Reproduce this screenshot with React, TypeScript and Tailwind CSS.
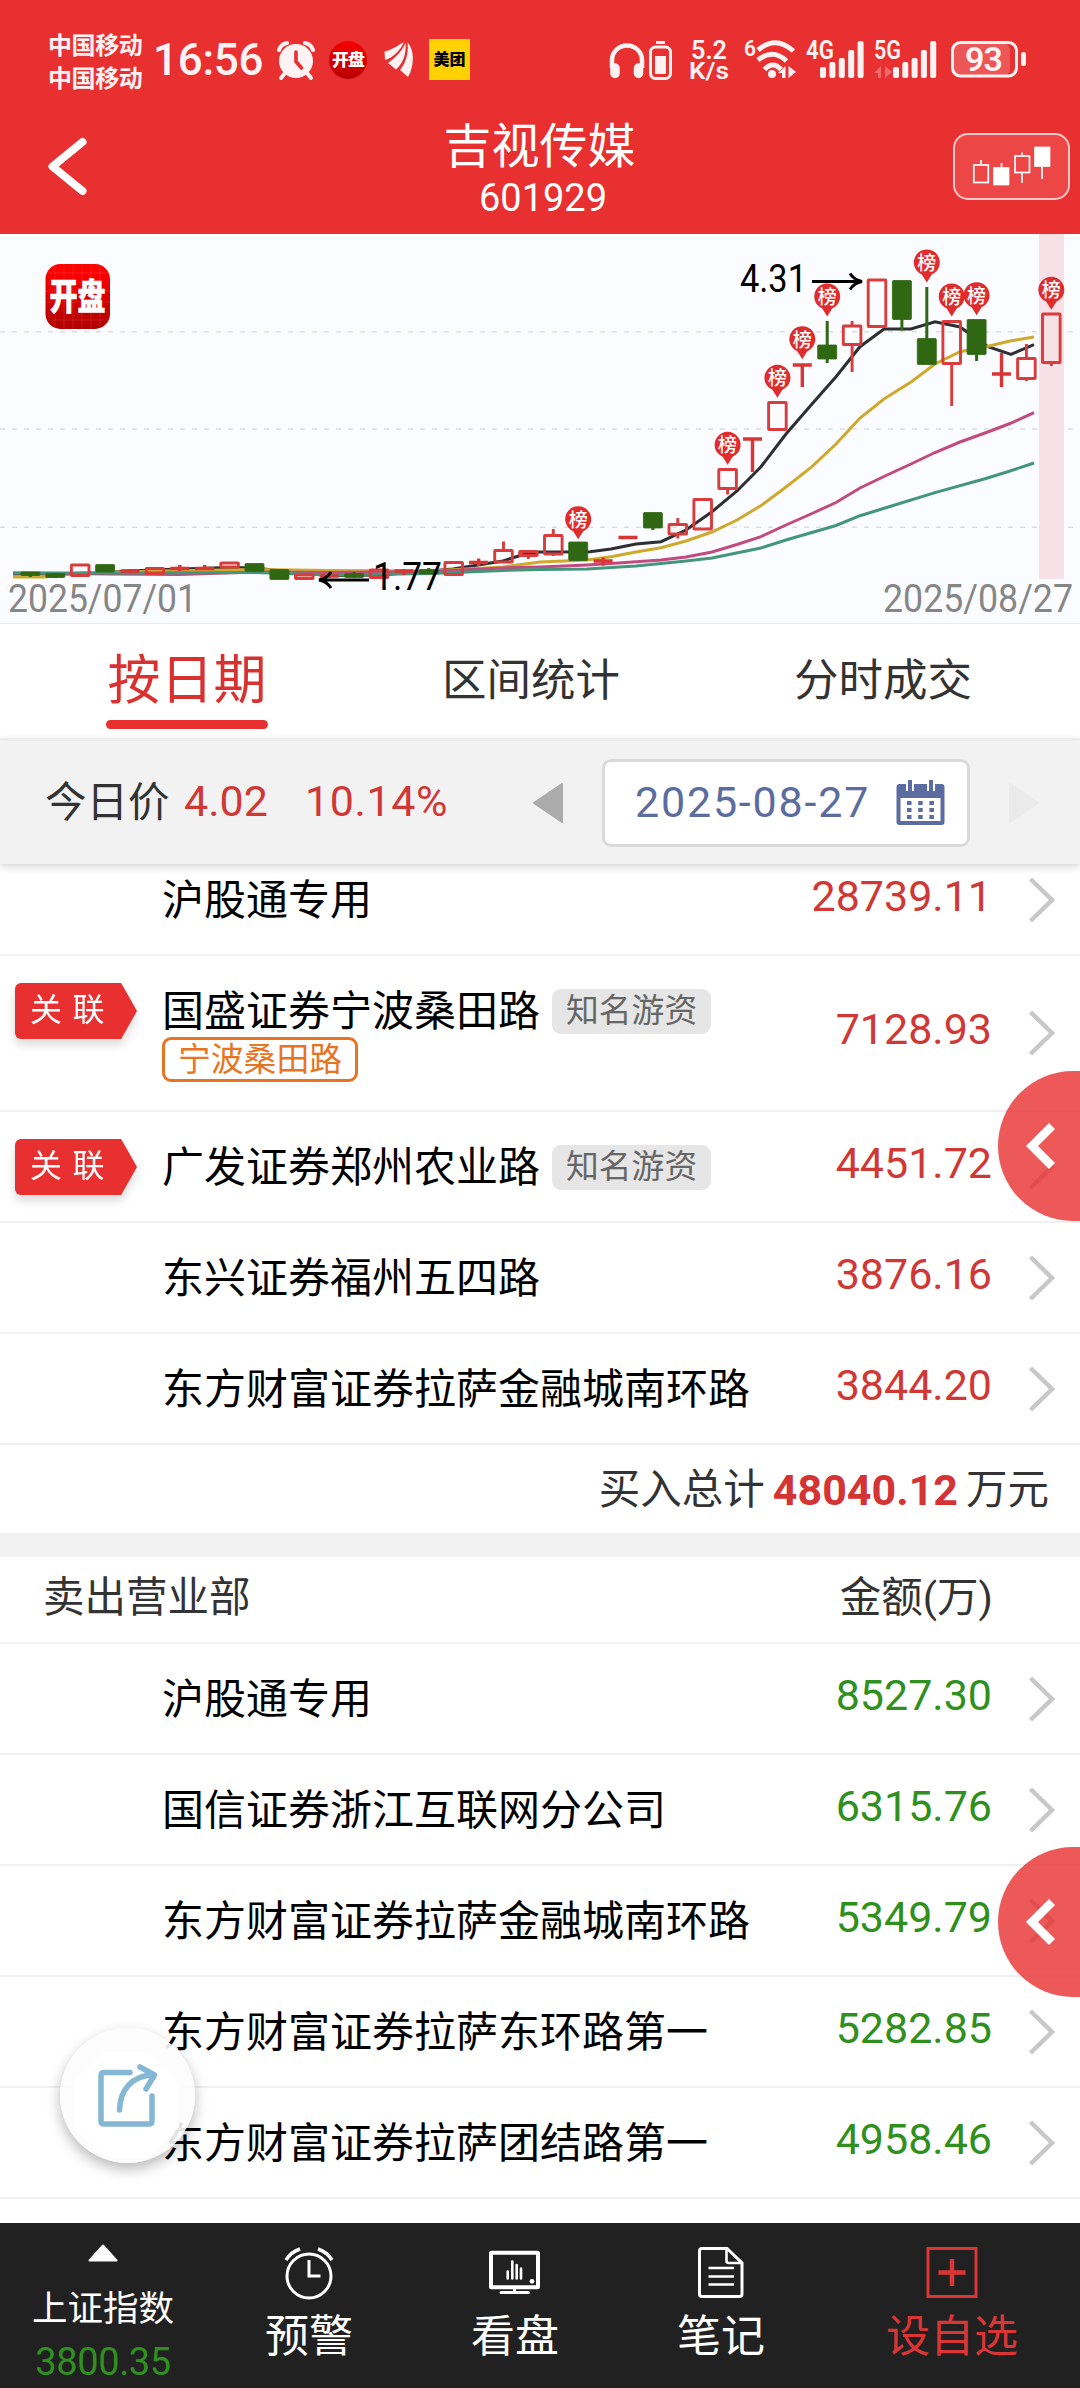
import type { ReactNode } from 'react';

interface Seat {
  name: string;
  amount: string;
  related?: boolean;
  famous?: boolean;
  alias?: string;
}

const BUY_SEATS: Seat[] = [
  { name: '沪股通专用', amount: '28739.11' },
  { name: '国盛证券宁波桑田路', amount: '7128.93', related: true, famous: true, alias: '宁波桑田路' },
  { name: '广发证券郑州农业路', amount: '4451.72', related: true, famous: true },
  { name: '东兴证券福州五四路', amount: '3876.16' },
  { name: '东方财富证券拉萨金融城南环路', amount: '3844.20' }
];

const SELL_SEATS: Seat[] = [
  { name: '沪股通专用', amount: '8527.30' },
  { name: '国信证券浙江互联网分公司', amount: '6315.76' },
  { name: '东方财富证券拉萨金融城南环路', amount: '5349.79' },
  { name: '东方财富证券拉萨东环路第一', amount: '5282.85' },
  { name: '东方财富证券拉萨团结路第一', amount: '4958.46' }
];

// r = 空心阳线, g = 实心阴线, d = 一字 / T 字线
type Candle = ['r' | 'g' | 'd', number, number, number, number];

// [类型, 实体顶, 实体底, 上影, 下影]
const CANDLES: Candle[] = [
  ['g', 572, 575.5, 572, 577],
  ['g', 573.5, 577.5, 573, 578],
  ['r', 565, 575.5, 564, 575],
  ['g', 564.5, 572, 565, 572],
  ['d', 571, 571, 569, 573],
  ['r', 568.5, 573.5, 568, 574],
  ['d', 568.5, 568.5, 565, 571],
  ['d', 568.5, 568.5, 565, 570],
  ['r', 563, 567, 563, 567],
  ['g', 563.5, 571.5, 564, 572],
  ['g', 569.5, 579.5, 570, 579],
  ['r', 575, 578.5, 573, 578],
  ['d', 576, 576, 575, 578],
  ['g', 573.5, 577.5, 572, 578],
  ['r', 570, 577.5, 570, 577],
  ['d', 571, 571, 569, 575],
  ['g', 569.5, 574, 568, 574],
  ['r', 562.5, 574.5, 562, 574],
  ['d', 562.5, 562.5, 558.5, 566],
  ['r', 550.5, 562, 541.5, 562],
  ['r', 551.5, 555.5, 551, 559],
  ['r', 535.5, 554, 529, 556],
  ['g', 542, 560.5, 542, 560],
  ['d', 561, 561, 557.5, 565.5],
  ['d', 537.5, 537.5, 537, 538],
  ['g', 512.5, 528, 513, 530],
  ['r', 524.5, 534, 518, 538.5],
  ['r', 499.5, 529, 499, 529],
  ['r', 469.5, 488.5, 469, 494.5],
  ['d', 439, 439, 439, 472],
  ['r', 402.5, 429.5, 402, 431],
  ['d', 365, 365, 365, 387],
  ['g', 345, 359, 321, 363],
  ['r', 326, 344.5, 321, 372],
  ['r', 280, 326.5, 280, 326],
  ['g', 280.5, 319.5, 281, 330.5],
  ['g', 338.5, 364.5, 287, 364],
  ['r', 321.5, 363.5, 321, 406],
  ['g', 319.5, 354.5, 320, 361],
  ['d', 374, 374, 353, 387],
  ['r', 358.5, 378.5, 344, 381],
  ['r', 314, 362.5, 314, 366]
];

// 上榜日: [第几根, 标记顶部]
const PINS = [
  [22, 506.7],
  [28, 432.3],
  [30, 365.3],
  [31, 326.7],
  [32, 284],
  [36, 250],
  [37, 284],
  [38, 282.7],
  [41, 277.3]
];

const MA_LINES = [
  {
    color: '#cfa92c',
    points:
      '13,577 45,577 80,573 160,571 255,569.5 330,570.5 430,571 503,567 540,562 587,560 611,556.7 636,552 661,547.7 686,541 712,532 737,520 761,505.6 786,487 812,466.7 836,444 860,418 884,399 911,382 935,364 960,351.7 985,347 1010,341 1034,337'
  },
  {
    color: '#c14b80',
    points:
      '13,573 110,574 180,574.5 255,572 330,572.5 430,571.5 503,568 540,567 587,565 611,563.5 661,560 686,557 712,552 737,544.5 761,536.6 786,525 812,513.5 836,502.5 860,488 885,476 911,464 935,452.5 960,442 985,433 1010,423.5 1034,412.7'
  },
  {
    color: '#439679',
    points:
      '13,573 130,573 255,572.5 330,575 430,573.5 503,570.5 540,569.5 587,569 636,566 686,561 712,558 761,548 786,540 836,525.5 860,515.7 885,508 935,492.6 985,478.7 1010,471 1034,463'
  }
];

const MA5 =
  '13,574 80,574 130,571 165,569.5 230,567.5 255,568 305,573.5 330,575.5 380,575 430,571 453,569 478,565 503,561 528,553 540,552 590,551.7 611,549 636,544 661,541.7 686,530 712,511.7 737,491 761,466.7 786,434 812,404 836,376.7 860,346.7 884,329 911,329 935,321.7 960,327 988,346.7 1011,354.3 1034,344.7';

const candleX = (i: number) => 30.4 + 24.9 * i;

function StatusBar() {
  return (
    <div className="flex h-[118px] items-start pt-[33px] text-[#fff2f2]">
      <div className="ml-[48px] w-[100px] text-[24px] leading-[33px] font-bold tracking-[-0.4px]">
        <div className="-mt-[3px]">中国移动</div>
        <div>中国移动</div>
      </div>
      <div className="ml-[5px] w-[118px] text-[44px] leading-[54px] font-medium tracking-[-0.3px]">16:56</div>
      <svg className="ml-[6px] mt-[8px]" width="38" height="40" viewBox="0 0 38 40">
        <circle cx="19" cy="20" r="17" fill="currentColor" />
        <path d="M2 9 Q4 3 10 2 M36 9 Q34 3 28 2" stroke="currentColor" strokeWidth="4" fill="none" strokeLinecap="round" />
        <path d="M8 32 L4 37 M30 32 L34 37" stroke="currentColor" strokeWidth="4" strokeLinecap="round" />
        <path d="M19 11 V20.5 L24.500 27" stroke="#e83030" strokeWidth="3.600" fill="none" strokeLinecap="round" />
      </svg>
      <div className="ml-[14px] mt-[8px] flex size-[38px] items-center justify-center rounded-full bg-linear-to-b from-[#f80000] to-[#b80000]">
        <span className="text-[17px] leading-none font-black tracking-[-1px] text-white">开盘</span>
      </div>
      <svg className="ml-[17px] mt-[9px]" width="30" height="36" viewBox="0 0 30 36" fill="currentColor">
        <path d="M20 0 C13 4 6 9 0.500 9.500 L1 18 C9 15.500 16 9 20 0Z" />
        <path d="M21.500 1 C17.500 10 11 16 4 21 L12 27.500 C19 21 22.500 12 21.500 1Z" />
        <path d="M23.500 0.500 C25 12 21 22 16 28 L24 35 C30 25 31 8 23.500 0.500Z" />
      </svg>
      <div className="ml-[15px] mt-[6px] flex h-[41px] w-[41px] items-center justify-center bg-[#ffd100] text-[16px] leading-none font-black text-black">
        美团
      </div>
      <svg className="ml-auto mt-[3px]" width="480" height="50" viewBox="600 36 480 50">
        <g fill="none" stroke="currentColor">
          <path d="M612 68 V60 A15 14.500 0 0 1 642 60 V68" strokeWidth="4.500" />
          <path d="M615 68 V73.500 M638.500 68 V73.500" strokeWidth="9.500" strokeLinecap="round" />
          <rect x="650.500" y="47" width="20" height="31.500" rx="5" strokeWidth="3" />
          <path d="M656 42.500 H665" strokeWidth="3" />
          <path d="M758 50 Q775.500 35 793.500 51" strokeWidth="5" />
          <path d="M758 60 Q773 48 786.500 61" strokeWidth="5" />
          <path d="M764.500 69.500 Q773 60.500 781 69.500" strokeWidth="5" />
        </g>
        <g fill="currentColor">
          <rect x="655" y="56" width="11" height="18" />
          <circle cx="772" cy="74" r="4" />
          <path d="M785.500 66 V78 H782 V73 H778Z M788.500 66 L796 72 L788.500 78Z" />
          <text x="691" y="59" fontSize="25" fontWeight="600" textLength="36" lengthAdjust="spacingAndGlyphs">5.2</text>
          <text x="689" y="79" fontSize="24" fontWeight="600" textLength="40" lengthAdjust="spacingAndGlyphs">K/s</text>
          <text x="744" y="56" fontSize="22" fontWeight="600" textLength="12" lengthAdjust="spacingAndGlyphs">6</text>
          <text x="806" y="59" fontSize="25" fontWeight="600" textLength="28" lengthAdjust="spacingAndGlyphs">4G</text>
          <text x="874" y="59" fontSize="25" fontWeight="600" textLength="27" lengthAdjust="spacingAndGlyphs">5G</text>
          {[67, 62, 58, 50, 41].map((top, i) => (
            <rect key={top} x={820 + i * 9.4} y={top} width="6" height={78 - top} rx="2" />
          ))}
          {[67, 62, 58, 50, 41].map((top, i) => (
            <rect key={top} x={893 + i * 9.3} y={top} width="6" height={78 - top} rx="2" />
          ))}
          <path d="M881 66 V78 H878 V73 H874Z M885 66 L892 72 L885 78Z" opacity="0.3" />
          <rect x="953" y="43" width="57" height="33" rx="7" opacity="0.2" />
          <rect x="1021" y="52" width="5" height="14" rx="2.500" />
          <text x="965" y="71" fontSize="34" fontWeight="600" textLength="38">93</text>
        </g>
        <rect x="952.500" y="42.500" width="64" height="33.500" rx="8" fill="none" stroke="currentColor" strokeWidth="3" />
      </svg>
    </div>
  );
}

function Header() {
  return (
    <div className="flex h-[116px] items-start justify-between pr-[10px] pl-[46px] text-white">
      <svg className="mt-[18px]" width="44" height="62" viewBox="46 136 44 62">
        <path d="M82.500 142 L52.500 166.500 L82.500 191" fill="none" stroke="currentColor" strokeWidth="8" strokeLinecap="round" strokeLinejoin="round" />
      </svg>
      <div className="ml-[36px] flex flex-col items-center pt-[1px]">
        <div className="text-[48px] leading-[56px]">吉视传媒</div>
        <div className="ml-[7px] text-[38px] leading-[46px]">601929</div>
      </div>
      <div className="mt-[15px] flex h-[67px] w-[117px] items-center justify-center rounded-[15px] border-2 border-white/70 bg-[#ec4646]">
        <svg width="113" height="63" viewBox="956 135 113 63" stroke="white" strokeWidth="1.700">
          <path d="M982 160 V164 M1002.500 163 V167 M1023 152.500 V155 M1023 173 V183 M1043 167 V179" />
          <rect x="974.800" y="165" width="14.500" height="17.500" fill="none" />
          <rect x="995" y="168" width="14.500" height="16.500" fill="white" />
          <rect x="1016" y="156" width="14.500" height="16.500" fill="none" />
          <rect x="1036" y="147.500" width="14.500" height="18.500" fill="white" />
        </svg>
      </div>
    </div>
  );
}

function KLineChart() {
  return (
    <svg className="block shrink-0 border-b border-[#ebecee] bg-[#fbfcff]" width="1080" height="390" viewBox="0 234 1080 389">
      <defs>
        <linearGradient id="logo" x1="0" y1="0" x2="0" y2="1">
          <stop offset="0.100" stopColor="#ff0000" />
          <stop offset="1" stopColor="#ae0000" />
        </linearGradient>
      </defs>

      {[331.7, 429, 527.3].map((y) => (
        <path key={y} d={`M0 ${y} H1075`} stroke="#dcdde1" strokeWidth="1.500" strokeDasharray="5 7" />
      ))}
      <rect x="1039" y="234" width="25" height="345" fill="#f7e0e6" />

      <rect x="45.500" y="264" width="64.500" height="65" rx="15" fill="url(#logo)" />
      <path d="M55 264 V329 M64 264 V329 M73 264 V329 M82 264 V329 M91 264 V329 M100 264 V329 M46 273 H110 M46 291 H110 M46 302 H110 M46 320 H110" stroke="white" strokeOpacity="0.100" />
      <text transform="translate(49.500 310) scale(0.780 1)" fontSize="36" fontWeight="900" fill="white" stroke="white" strokeWidth="0.600">
        开盘
      </text>

      <polyline points={MA5} fill="none" stroke="#2e2e33" strokeWidth="3" />
      {MA_LINES.map((line) => (
        <polyline key={line.color} points={line.points} fill="none" stroke={line.color} strokeWidth="3" />
      ))}

      {CANDLES.map(([kind, top, bottom, high, low], i) => {
        const x = candleX(i);
        if (kind === 'g') {
          return (
            <g key={i} fill="#2f6712" stroke="#2f6712">
              <path d={`M${x} ${high} V${low}`} strokeWidth="3" />
              <rect x={x - 9.5} y={top} width="19" height={bottom - top} rx="1" strokeWidth="0.800" />
            </g>
          );
        }
        if (kind === 'd') {
          return (
            <path key={i} d={`M${x - 9.5} ${top} H${x + 9.5} M${x} ${high} V${low}`} stroke="#d93535" strokeWidth="3.400" fill="none" />
          );
        }
        return (
          <g key={i} fill="none" stroke="#d93c3c" strokeWidth="2.900">
            <path d={`M${x} ${high} V${top} M${x} ${bottom} V${low}`} />
            <rect x={x - 8.8} y={top} width="17.600" height={bottom - top} rx="0.500" />
          </g>
        );
      })}

      {PINS.map(([i, top]) => {
        const x = candleX(i);
        return (
          <g key={i}>
            <path
              d={`M${x} ${top + 32.5} L${x - 5} ${top + 24.5} A13 13 0 1 1 ${x + 5} ${top + 24.5} Z`}
              fill="#e02c2c"
            />
            <text x={x} y={top + 20} textAnchor="middle" fontSize="19" fontWeight="500" fill="white">
              榜
            </text>
          </g>
        );
      })}

      <g fill="none" stroke="black" strokeWidth="3">
        <path d="M812 281.500 H859 M850 273.500 Q854 280 862 281.500 Q854 283 850 289.500" />
        <path d="M369 580 H322 M331 572 Q327 578.500 319 580 Q327 581.500 331 588" />
      </g>
      <g fontSize="38">
        <text x="740" y="291.500" textLength="67" lengthAdjust="spacingAndGlyphs">4.31</text>
        <text x="373" y="590" textLength="69" lengthAdjust="spacingAndGlyphs">1.77</text>
      </g>
      <g fontSize="38" fill="#868686">
        <text x="8" y="612" textLength="189" lengthAdjust="spacingAndGlyphs">2025/07/01</text>
        <text x="883" y="612" textLength="190" lengthAdjust="spacingAndGlyphs">2025/08/27</text>
      </g>
    </svg>
  );
}

function Tabs() {
  return (
    <div className="flex h-[114px] shrink-0 justify-between bg-white px-[106px] text-[44.500px] leading-[115px] text-[#333]">
      <div className="relative w-[162px] text-center text-[53px] text-[#d93030]">
        按日期
        <div className="absolute bottom-[9px] left-0 h-[9px] w-[162px] rounded-[5px] bg-[#e83030]" />
      </div>
      <div>区间统计</div>
      <div className="mr-[2px]">分时成交</div>
    </div>
  );
}

function PriceBar() {
  return (
    <div className="relative z-10 flex h-[126px] shrink-0 items-center border-t-3 border-[#ececec] bg-[#f2f2f2] pl-[45px] shadow-[0_3px_8px_rgba(0,0,0,0.16)]">
      <span className="w-[139px] text-[41.500px] leading-[60px] text-[#333]">今日价</span>
      <span className="w-[121px] pb-[3px] text-[43px] leading-[60px] text-[#d03836]">4.02</span>
      <span className="w-[227px] pb-[3px] text-[43px] leading-[60px] tracking-[0.600px] text-[#d03836]">10.14%</span>
      <svg width="32" height="42" viewBox="0 0 32 42">
        <path d="M30 2 V40 L2 21Z" fill="#ababab" stroke="#ababab" strokeWidth="2" strokeLinejoin="round" />
      </svg>
      <div className="ml-[38px] flex h-[88px] w-[368px] items-center rounded-[9px] border-3 border-[#dadada] bg-white pl-[30px]">
        <span className="w-[261px] pb-[2px] text-[43px] leading-[60px] tracking-[1.800px] text-[#5b6da0]">2025-08-27</span>
        <svg width="49" height="46" viewBox="0 0 49 46">
          <rect x="0.500" y="4" width="48" height="41" rx="3" fill="#5b6da0" />
          <rect x="4.500" y="18" width="40" height="23" fill="white" />
          <path d="M14 0 V11 M35 0 V11" stroke="white" strokeWidth="8" />
          <path d="M14 0 V11 M35 0 V11" stroke="#5b6da0" strokeWidth="4" />
          <path d="M11 23 H40 M11 30 H40 M11 37 H40" stroke="#5b6da0" strokeWidth="4" strokeDasharray="4.500 6.700" />
        </svg>
      </div>
      <svg className="ml-[38px]" width="32" height="42" viewBox="0 0 32 42">
        <path d="M2 2 V40 L30 21Z" fill="#eaeaea" stroke="#eaeaea" strokeWidth="2" strokeLinejoin="round" />
      </svg>
    </div>
  );
}

function SeatRow({ seat, amountClass }: { seat: Seat; amountClass: string }) {
  return (
    <div
      className={`flex shrink-0 items-center border-b-2 border-[#f0f0f0] ${seat.alias ? 'h-[156px]' : 'h-[111px]'}`}
    >
      <div className="w-[162px] self-stretch pt-[27px] pl-[15px]">
        {seat.related && (
          <div className="h-[56px] w-[122px] drop-shadow-[0_6px_5px_rgba(0,0,0,0.14)]">
            <div className="h-full w-full rounded-[6px] bg-[#e83030] pl-[15px] text-[32px] leading-[54px] tracking-[10.500px] whitespace-nowrap text-white [clip-path:polygon(0_0,87%_0,100%_50%,87%_100%,0_100%)]">
              关联
            </div>
          </div>
        )}
      </div>
      <div className="flex flex-col items-start pt-[2px]">
        <div className="flex items-center text-[42px] leading-[51px] whitespace-nowrap text-black">
          {seat.name}
          {seat.famous && (
            <span className="ml-[12px] h-[45px] rounded-[9px] bg-[#e6e6e6] px-[14px] text-[32.800px] leading-[45px] text-[#666]">
              知名游资
            </span>
          )}
        </div>
        {seat.alias && (
          <div className="h-[45px] rounded-[9px] border-3 border-[#e87422] px-[13px] text-[32.800px] leading-[40px] text-[#e87422]">
            {seat.alias}
          </div>
        )}
      </div>
      <div className={`ml-auto pb-[8px] text-[43px] leading-[50px] ${amountClass}`}>{seat.amount}</div>
      <svg className="mr-[24px] ml-[36px]" width="28" height="48" viewBox="0 0 28 48">
        <path d="M2.500 3 L24 24 L2.500 45" fill="none" stroke="#c8c8c8" strokeWidth="4.500" />
      </svg>
    </div>
  );
}

function TotalRow({ label, value, valueClass }: { label: string; value: string; valueClass: string }) {
  return (
    <div className="flex h-[88px] shrink-0 items-center justify-end pt-[1px] pr-[31px] text-[41.500px] leading-[60px] text-[#333]">
      {label}
      <span className={`mx-[8px] text-[43px] font-bold ${valueClass}`}>{value}</span>
      万元
    </div>
  );
}

function SideHandle({ className }: { className: string }) {
  return (
    <div className={`absolute right-0 z-20 flex h-[150px] w-[82px] items-center rounded-l-[75px] bg-[#e83030]/80 ${className}`}>
      <svg className="ml-[27px]" width="32" height="48" viewBox="0 0 32 48">
        <path d="M27 4 L7 24 L27 44" fill="none" stroke="white" strokeWidth="8.500" />
      </svg>
    </div>
  );
}

function ShareButton() {
  return (
    <div className="absolute top-[2028px] left-[60px] z-20 size-[135px] rounded-full bg-[#fcfcfc]/90 shadow-[0_6px_14px_rgba(0,0,0,0.28)]">
      <svg width="135" height="135" viewBox="60 2028 135 135">
        <path d="M105 2051 H148 L179 2082 V2127 L148 2158 H105 L73 2127 V2082Z" fill="white" />
        <g fill="none" stroke="#83b7d4" strokeWidth="5.500" strokeLinecap="round" strokeLinejoin="round">
          <path d="M130 2072.500 H104 Q101 2072.500 101 2075.500 V2121 Q101 2124 104 2124 H149 Q152 2124 152 2121 V2096" />
          <path d="M119.500 2110 C120 2090 132 2075.500 153 2075 M140 2067 L154.500 2075 L146 2089" />
        </g>
      </svg>
    </div>
  );
}

function NavItem({ label, children, className = '' }: { label: string; children: ReactNode; className?: string }) {
  return (
    <div className={`flex flex-col items-center pt-[22px] ${className || 'w-[206px]'}`}>
      <svg width="56" height="56" viewBox="0 0 56 56" fill="none" stroke="currentColor" strokeWidth="3">
        {children}
      </svg>
      <span className="mt-[4px] text-[44px] leading-[64px]">{label}</span>
    </div>
  );
}

function BottomNav() {
  return (
    <div className="relative z-10 flex h-[165px] shrink-0 bg-[#212121] text-white">
      <div className="flex w-[206px] flex-col items-center pt-[21px]">
        <svg width="30" height="18" viewBox="0 0 30 18">
          <path d="M15 1.500 L28.500 16.500 H1.500Z" fill="white" stroke="white" strokeWidth="2" strokeLinejoin="round" />
        </svg>
        <span className="mt-[22px] text-[35.500px] leading-[50px]">上证指数</span>
        <span className="mt-[3px] text-[38px] leading-[50px] tracking-[-0.400px] text-[#2f8f20]">3800.35</span>
      </div>
      <NavItem label="预警">
        <circle cx="28" cy="31" r="22" />
        <path d="M28 15 V31 H39.500" />
        <path d="M5 15 Q10 7 19 4 M51 15 Q46 7 37 4" strokeWidth="3.500" />
      </NavItem>
      <NavItem label="看盘">
        <rect x="4" y="7.700" width="47" height="34.600" rx="0.500" strokeWidth="4" />
        <path d="M27.500 43 V47 M14 47.500 H41.500" strokeLinecap="round" />
        <path d="M20.700 26.500 V33.500 M25.300 16.500 V33.500 M29.700 20 V33.500 M34 23.500 V33.500" strokeWidth="2.600" strokeLinecap="round" />
        <circle cx="45" cy="36.300" r="2.400" fill="currentColor" stroke="none" />
      </NavItem>
      <NavItem label="笔记">
        <path d="M9 3.500 H34 L49 18 V49 Q49 51.500 46.500 51.500 H9 Q6.500 51.500 6.500 49 V6 Q6.500 3.500 9 3.500Z" />
        <path d="M33.500 4 V16 Q33.500 18 36 18 H49 M15.500 23 H41 M15.500 31.500 H41 M15.500 39.500 H41" strokeWidth="2.600" />
      </NavItem>
      <NavItem label="设自选" className="w-[256px] text-[#dc3535]">
        <rect x="4" y="3.500" width="48" height="48" />
        <path d="M14.500 27.500 H41.500 M28 14 V41" strokeWidth="4.500" />
      </NavItem>
    </div>
  );
}

export default function App() {
  return (
    <div className="relative flex h-[2388px] w-[1080px] flex-col overflow-hidden bg-white font-['Roboto','Noto_Sans_CJK_SC',sans-serif]">
      <div className="h-[234px] shrink-0 bg-[#e83030]">
        <StatusBar />
        <Header />
      </div>
      <KLineChart />
      <Tabs />
      <PriceBar />

      <div className="min-h-0 flex-1 overflow-hidden">
        {/* 列表已向上滚动一小段 */}
        <div className="-mt-[19px] flex flex-col">
          {BUY_SEATS.map((seat) => (
            <SeatRow key={seat.name} seat={seat} amountClass="text-[#d03836]" />
          ))}
          <TotalRow label="买入总计" value="48040.12" valueClass="text-[#d43433]" />
          <div className="h-[24px] shrink-0 bg-[#f2f2f2]" />
          <div className="flex h-[87px] shrink-0 items-center justify-between border-b-2 border-[#f0f0f0] pr-[87px] pb-[4px] pl-[43px] text-[41.500px] leading-[60px] text-[#333]">
            <span>卖出营业部</span>
            <span>金额(万)</span>
          </div>
          {SELL_SEATS.map((seat) => (
            <SeatRow key={seat.name} seat={seat} amountClass="text-[#2f9020]" />
          ))}
          <div className="pt-[2px]">
            <TotalRow label="卖出总计" value="30434.16" valueClass="text-[#2f9020]" />
          </div>
        </div>
      </div>

      <BottomNav />
      <SideHandle className="top-[1071px]" />
      <SideHandle className="top-[1847px]" />
      <ShareButton />
    </div>
  );
}
